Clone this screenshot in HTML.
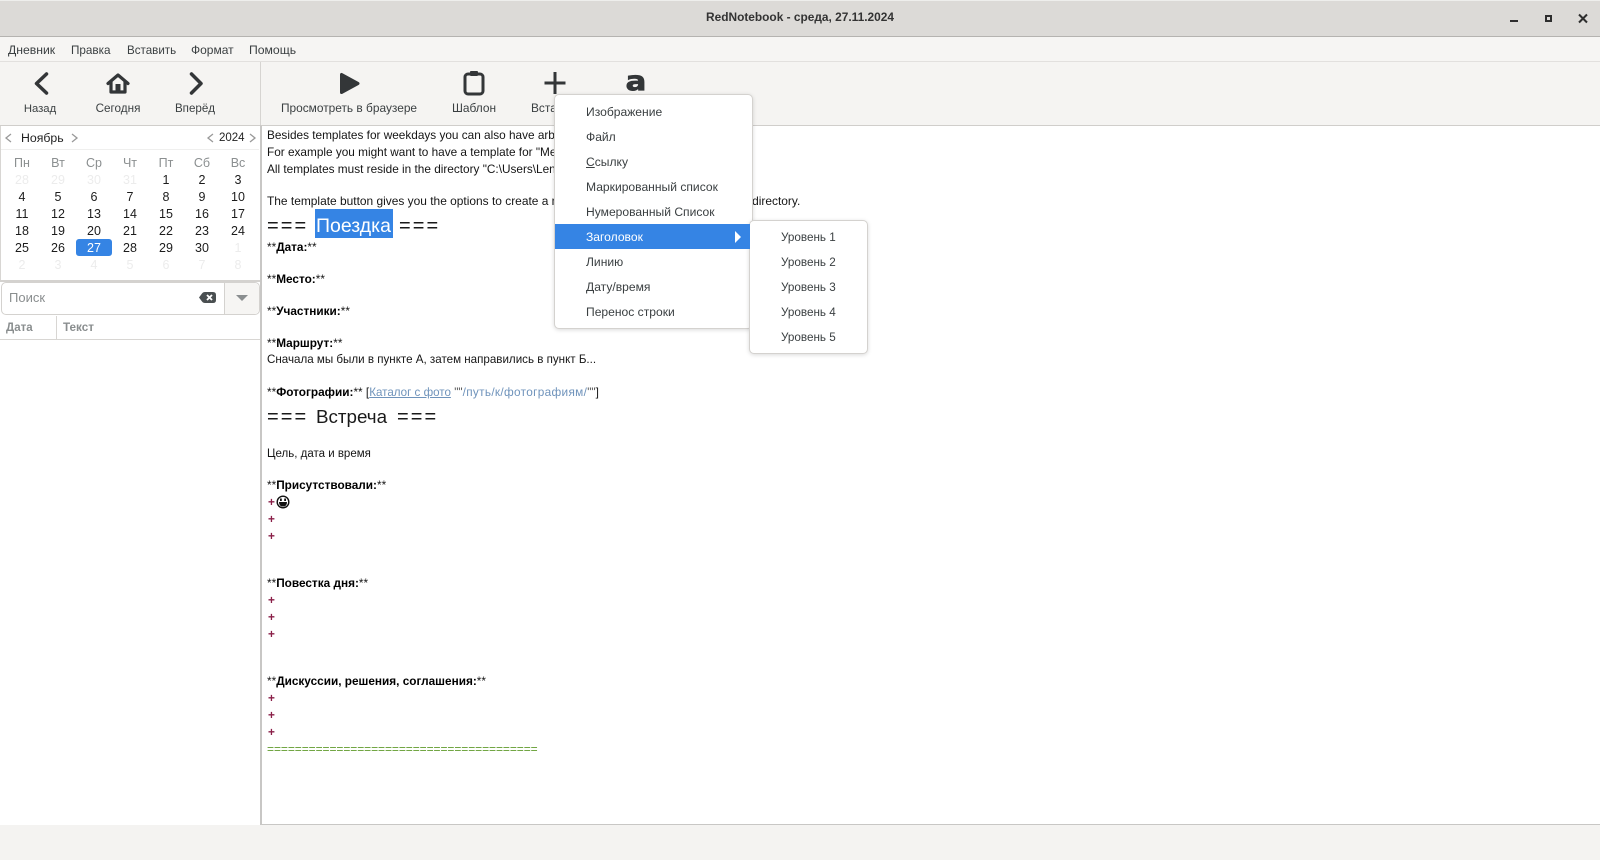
<!DOCTYPE html>
<html><head><meta charset="utf-8"><style>
html,body{margin:0;padding:0;width:1600px;height:860px;overflow:hidden;background:#f5f4f2;font-family:"Liberation Sans","DejaVu Sans",sans-serif}
.a,.t,.c,.e{position:absolute}
.t,.c,.e{white-space:nowrap;line-height:16px;font-size:12px;color:#3a3f41}
.c{transform:translateX(-50%)}
.e{left:267px;color:#151515;font-size:11.8px}
.e b{color:#000;font-size:11.8px}
.p{color:#8a1f48;left:268px;font-weight:bold}
.d{color:#1c1c1c;width:36px;text-align:center;position:absolute;font-size:12.5px;line-height:16px}
.h{color:#8b8f90}.o{color:#ececec}
.m{left:586px;color:#3a3f41;font-size:12.1px}
.s{left:781px;color:#3a3f41;font-size:11.7px}
.hd{position:absolute;white-space:nowrap;color:#1a1a1a;line-height:24px;font-size:19.5px}
.eq{letter-spacing:2.1px;font-size:20px}
</style></head><body>
<div class="a" style="left:0;top:0;width:1600px;height:36px;background:#dcdad7;border-top:1px solid #eeeeec;box-sizing:border-box"></div>
<div class="a" style="left:0;top:36px;width:1600px;height:1px;background:#b5b3b0"></div>
<div class="c" style="left:800px;top:9px;font-weight:bold;font-size:11.9px;color:#333">RedNotebook - среда, 27.11.2024</div>
<svg class="a" style="left:1500px;top:10px" width="95" height="20" fill="none" stroke="#2e2e2e"><path d="M10 11H18" stroke-width="2"/><rect x="46" y="6" width="5" height="5" stroke-width="2"/><path d="M79 4.500L87 12.500M87 4.500L79 12.500" stroke-width="2"/></svg>
<div class="a" style="left:0;top:37px;width:1600px;height:24px;background:#f6f5f3"></div>
<div class="a" style="left:0;top:61px;width:1600px;height:1px;background:#e2e0de"></div>
<div class="t" style="left:8px;top:42px;font-size:12.2px">Дневник</div>
<div class="t" style="left:71px;top:43px;font-size:11.7px">Правка</div>
<div class="t" style="left:127px;top:43px;font-size:11.6px">Вставить</div>
<div class="t" style="left:191px;top:42px;font-size:12px">Формат</div>
<div class="t" style="left:249px;top:42px;font-size:12.2px">Помощь</div>
<div class="a" style="left:260px;top:62px;width:1px;height:64px;background:#d6d4d1"></div>
<div class="a" style="left:0;top:125px;width:1600px;height:1px;background:#d0cecb"></div>
<svg class="a" style="left:0;top:62px" width="660" height="44" fill="none" stroke="#333638">
<path d="M46.500 12L36.500 21.500L46.500 31" stroke-width="3.500" stroke-linecap="round" stroke-linejoin="round"/>
<path d="M108 21.500L118 13L128 21.500M111 19.500V30H125V19.500" stroke-width="3.200" stroke-linejoin="round" stroke-linecap="round"/><rect x="115.500" y="22" width="5" height="8" fill="#333638" stroke="none"/>
<path d="M191.500 12L201 21.500L191.500 31" stroke-width="3.500" stroke-linecap="round" stroke-linejoin="round"/>
<path d="M341.500 12.500V30.500L358 21.500Z" fill="#333638" stroke-width="3" stroke-linejoin="round"/>
<rect x="465" y="12" width="18" height="20" rx="3" stroke-width="3"/><rect x="470" y="9" width="8" height="5" rx="1" fill="#333638" stroke="none"/>
<path d="M555 10V32M544.500 21H565.500" stroke-width="3"/>
</svg>
<div class="c" style="left:636px;top:67px;font-family:'DejaVu Sans',sans-serif;font-weight:bold;font-size:27px;line-height:30px;color:#333638;-webkit-text-stroke:.7px #333638;transform:translateX(-50%) scaleX(1.15)">a</div>
<div class="c" style="left:40px;top:101px;font-size:11.3px">Назад</div>
<div class="c" style="left:118px;top:101px;font-size:11.7px">Сегодня</div>
<div class="c" style="left:195px;top:101px;font-size:11.6px">Вперёд</div>
<div class="c" style="left:349px;top:100px;font-size:11.9px">Просмотреть в браузере</div>
<div class="c" style="left:474px;top:100px;font-size:11.9px">Шаблон</div>
<div class="t" style="left:531px;top:100px;font-size:11.9px">Вставка</div>

<div class="a" style="left:0;top:126px;width:260px;height:734px;background:#fff"></div>
<div class="a" style="left:0;top:825px;width:1600px;height:35px;background:#f4f3f1"></div>
<div class="a" style="left:1px;top:149px;width:258px;height:1px;background:#efefee"></div>
<div class="a" style="left:0;top:126px;width:1px;height:155px;background:#d8d6d3"></div>
<div class="a" style="left:0;top:280px;width:260px;height:2px;background:#d4d2cf"></div>
<svg class="a" style="left:0;top:130px" width="260" height="16" fill="none" stroke="#999" stroke-width="1.300"><path d="M11 4L6 8L11 12M72 4L77 8L72 12M213 4L208 8L213 12M250 4L255 8L250 12"/></svg>
<div class="t" style="left:21px;top:130px;color:#222;font-size:12.3px">Ноябрь</div>
<div class="t" style="left:219px;top:130px;color:#222;font-size:11.5px">2024</div>
<div class="a" style="left:76px;top:239px;width:36px;height:17px;background:#3584e4;border-radius:3px"></div>
<div class="d h" style="left:4px;top:155px">Пн</div><div class="d h" style="left:40px;top:155px">Вт</div><div class="d h" style="left:76px;top:155px">Ср</div><div class="d h" style="left:112px;top:155px">Чт</div><div class="d h" style="left:148px;top:155px">Пт</div><div class="d h" style="left:184px;top:155px">Сб</div><div class="d h" style="left:220px;top:155px">Вс</div>
<div class="d o" style="left:4px;top:172px">28</div><div class="d o" style="left:40px;top:172px">29</div><div class="d o" style="left:76px;top:172px">30</div><div class="d o" style="left:112px;top:172px">31</div><div class="d" style="left:148px;top:172px">1</div><div class="d" style="left:184px;top:172px">2</div><div class="d" style="left:220px;top:172px">3</div>
<div class="d" style="left:4px;top:189px">4</div><div class="d" style="left:40px;top:189px">5</div><div class="d" style="left:76px;top:189px">6</div><div class="d" style="left:112px;top:189px">7</div><div class="d" style="left:148px;top:189px">8</div><div class="d" style="left:184px;top:189px">9</div><div class="d" style="left:220px;top:189px">10</div>
<div class="d" style="left:4px;top:206px">11</div><div class="d" style="left:40px;top:206px">12</div><div class="d" style="left:76px;top:206px">13</div><div class="d" style="left:112px;top:206px">14</div><div class="d" style="left:148px;top:206px">15</div><div class="d" style="left:184px;top:206px">16</div><div class="d" style="left:220px;top:206px">17</div>
<div class="d" style="left:4px;top:223px">18</div><div class="d" style="left:40px;top:223px">19</div><div class="d" style="left:76px;top:223px">20</div><div class="d" style="left:112px;top:223px">21</div><div class="d" style="left:148px;top:223px">22</div><div class="d" style="left:184px;top:223px">23</div><div class="d" style="left:220px;top:223px">24</div>
<div class="d" style="left:4px;top:240px">25</div><div class="d" style="left:40px;top:240px">26</div><div class="d" style="left:76px;top:240px;color:#fff">27</div><div class="d" style="left:112px;top:240px">28</div><div class="d" style="left:148px;top:240px">29</div><div class="d" style="left:184px;top:240px">30</div><div class="d o" style="left:220px;top:240px">1</div>
<div class="d o" style="left:4px;top:257px">2</div><div class="d o" style="left:40px;top:257px">3</div><div class="d o" style="left:76px;top:257px">4</div><div class="d o" style="left:112px;top:257px">5</div><div class="d o" style="left:148px;top:257px">6</div><div class="d o" style="left:184px;top:257px">7</div><div class="d o" style="left:220px;top:257px">8</div>
<div class="a" style="left:1px;top:282px;width:257px;height:31px;border:1px solid #d4d2cf;border-radius:5px;background:#fff"></div>
<div class="a" style="left:224px;top:283px;width:34px;height:31px;border-left:1px solid #d4d2cf;background:#f6f5f3;border-radius:0 5px 5px 0"></div>
<div class="t" style="left:9px;top:290px;color:#8a8e8f;font-size:13px">Поиск</div>
<svg class="a" style="left:199px;top:291px" width="18" height="14"><path d="M6 1H14Q17 1 17 4V9Q17 12 14 12H6Q4 12 3 10.500L0 6.500L3 2.500Q4 1 6 1Z" fill="#4a4f51"/><path d="M8 4L13 9M13 4L8 9" stroke="#fff" stroke-width="1.800"/></svg>
<svg class="a" style="left:235px;top:294px" width="14" height="8"><path d="M1 1H13L7 7Z" fill="#8a8e8f"/></svg>
<div class="a" style="left:0;top:339px;width:260px;height:1px;background:#d8d6d3"></div>
<div class="a" style="left:56px;top:316px;width:1px;height:23px;background:#d8d6d3"></div>
<div class="t" style="left:6px;top:320px;color:#8a8e8f;font-weight:bold;font-size:11.5px">Дата</div>
<div class="t" style="left:63px;top:320px;color:#8a8e8f;font-weight:bold;font-size:11.7px">Текст</div>

<div class="a" style="left:260px;top:125px;width:1340px;height:700px;background:#fff;border-left:2px solid #c8c7c5;border-top:1px solid #d0cecb;border-bottom:1px solid #c8c7c5;box-sizing:border-box"></div>
<div class="e" style="top:127px">Besides templates for weekdays you can also have arbitrary templates.</div>
<div class="e" style="top:144px">For example you might want to have a template for "Meeting" or "Journey".</div>
<div class="e" style="top:161px">All templates must reside in the directory "C:\Users\Lenovo\.rednotebook\files".</div>
<div class="e" style="top:193px;font-size:11.95px">The template button gives you the options to create a new template or to visit the templates directory.</div>
<div class="a" style="left:315px;top:209px;width:78px;height:29px;background:#3584e4"></div>
<div class="hd eq" style="left:267px;top:214px">===</div>
<div class="hd" style="left:316px;top:214px;color:#fff">Поездка</div>
<div class="hd eq" style="left:399px;top:214px">===</div>
<div class="e" style="top:239px">**<b>Дата:</b>**</div>
<div class="e" style="top:271px">**<b>Место:</b>**</div>
<div class="e" style="top:303px">**<b>Участники:</b>**</div>
<div class="e" style="top:335px">**<b>Маршрут:</b>**</div>
<div class="e" style="top:352px;font-size:11.6px">Сначала мы были в пункте А, затем направились в пункт Б...</div>
<div class="e" style="top:384px">**<b>Фотографии:</b>** [<span style="color:#6f93bb;text-decoration:underline;font-size:11.6px">Каталог с фото</span> <span style="color:#555">""</span><span style="color:#6f93bb;letter-spacing:.32px">/путь/к/фотографиям/</span><span style="color:#555">""</span>]</div>
<div class="hd eq" style="left:267px;top:405px">===</div>
<div class="hd" style="left:316px;top:405px;font-size:18.8px">Встреча</div>
<div class="hd eq" style="left:397px;top:405px">===</div>
<div class="e" style="top:446px;font-size:11.5px">Цель, дата и время</div>
<div class="e" style="top:477px">**<b>Присутствовали:</b>**</div>
<div class="e p" style="top:494px">+</div>
<svg class="a" style="left:276px;top:495px" width="14" height="14"><circle cx="7" cy="7" r="5.800" fill="#fff" stroke="#111" stroke-width="1.400"/><rect x="4" y="3.500" width="1.800" height="2.500" fill="#111"/><rect x="8.200" y="3.500" width="1.800" height="2.500" fill="#111"/><path d="M3 7H11Q11 11.500 7 11.500Q3 11.500 3 7Z" fill="#111"/></svg>
<div class="e p" style="top:511px">+</div>
<div class="e p" style="top:528px">+</div>
<div class="e" style="top:575px">**<b>Повестка дня:</b>**</div>
<div class="e p" style="top:592px">+</div>
<div class="e p" style="top:609px">+</div>
<div class="e p" style="top:626px">+</div>
<div class="e" style="top:673px">**<b>Дискуссии, решения, соглашения:</b>**</div>
<div class="e p" style="top:690px">+</div>
<div class="e p" style="top:707px">+</div>
<div class="e p" style="top:724px">+</div>
<div class="e" style="top:741px;color:#5f9a2c;font-size:12px;letter-spacing:-.07px">=======================================</div>

<div class="a" style="left:554px;top:94px;width:199px;height:235px;background:#fff;border:1px solid #d4d2cf;border-radius:5px;box-sizing:border-box;box-shadow:0 1px 4px rgba(0,0,0,.15)"></div>
<div class="a" style="left:749px;top:220px;width:119px;height:134px;background:#fff;border:1px solid #d4d2cf;border-radius:5px;box-sizing:border-box;box-shadow:0 1px 4px rgba(0,0,0,.15)"></div>
<div class="a" style="left:555px;top:224px;width:195px;height:25px;background:#3584e4"></div>
<svg class="a" style="left:734px;top:230px" width="8" height="14"><path d="M1 1V13L7 7Z" fill="#fff"/></svg>
<div class="t m" style="top:104px">Изображение</div>
<div class="t m" style="top:129px">Файл</div>
<div class="t m" style="top:154px"><u>С</u>сылку</div>
<div class="t m" style="top:179px">Маркированный список</div>
<div class="t m" style="top:204px">Нумерованный Список</div>
<div class="t m" style="top:229px;color:#fff">Заголовок</div>
<div class="t m" style="top:254px">Линию</div>
<div class="t m" style="top:279px">Дату/время</div>
<div class="t m" style="top:304px">Перенос строки</div>
<div class="t s" style="top:230px">Уровень 1</div>
<div class="t s" style="top:255px">Уровень 2</div>
<div class="t s" style="top:280px">Уровень 3</div>
<div class="t s" style="top:305px">Уровень 4</div>
<div class="t s" style="top:330px">Уровень 5</div>
</body></html>
